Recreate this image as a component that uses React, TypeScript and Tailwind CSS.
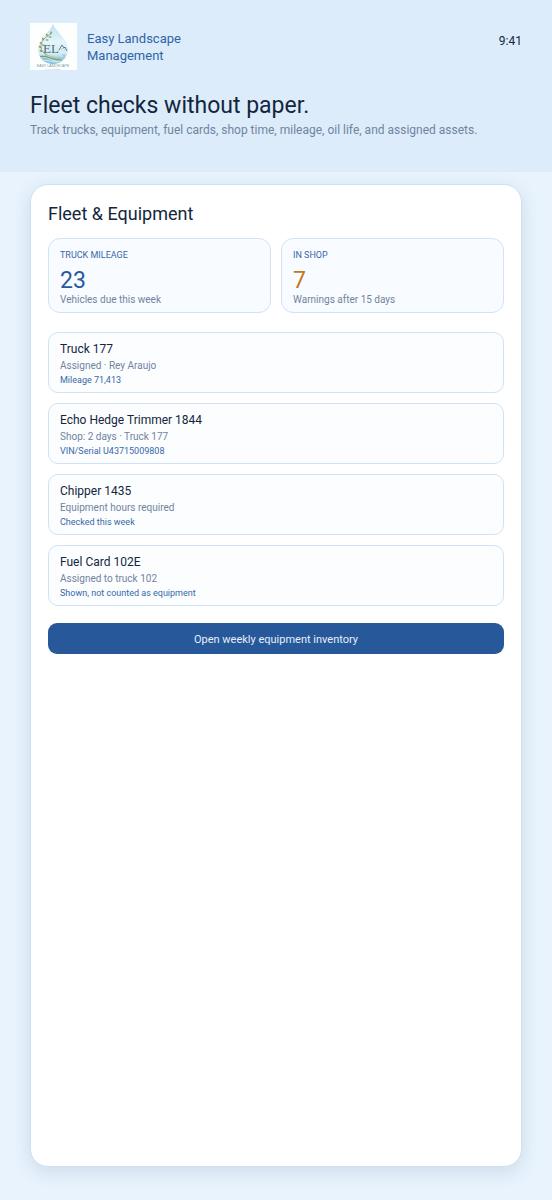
const stats = [
    { label: "TRUCK MILEAGE", value: "23", note: "Vehicles due this week", color: "text-[#285a9b]" },
    { label: "IN SHOP", value: "7", note: "Warnings after 15 days", color: "text-[#c27a16]" },
];

const assets = [
    { name: "Truck 177", status: "Assigned · Rey Araujo", detail: "Mileage 71,413" },
    { name: "Echo Hedge Trimmer 1844", status: "Shop: 2 days · Truck 177", detail: "VIN/Serial U43715009808" },
    { name: "Chipper 1435", status: "Equipment hours required", detail: "Checked this week" },
    { name: "Fuel Card 102E", status: "Assigned to truck 102", detail: "Shown, not counted as equipment" },
];

function Logo() {
    return (
        <svg viewBox="0 0 47 47" className="size-[47px] shrink-0 bg-[#fdfefe]" role="img" aria-label="Easy Landscape Management logo">
            <defs>
                <linearGradient id="drop" x1="0" y1="0" x2="0" y2="1">
                    <stop offset="0" stopColor="#b9e0f3" />
                    <stop offset="0.45" stopColor="#e6f4fb" />
                    <stop offset="0.75" stopColor="#d3ebf5" />
                    <stop offset="1" stopColor="#58a9dc" />
                </linearGradient>
                <clipPath id="dropClip">
                    <path d="M23 1C25 8 38 16 38 26a15 15 0 0 1-30 0C8 16 21 8 23 1Z" />
                </clipPath>
            </defs>
            <path d="M23 1C25 8 38 16 38 26a15 15 0 0 1-30 0C8 16 21 8 23 1Z" fill="url(#drop)" />
            <g clipPath="url(#dropClip)" fill="none">
                <path d="M8 33c8-2 12 3 18 3s8-2 13-2v10H8Z" fill="#8cc5e5" />
                <path d="M9 35c8-4 13 4 19 3s6-2 10-2" stroke="#e9f5f5" strokeWidth="1" />
                <path d="M10 34c7-3 10 4 22 3" stroke="#81995c" strokeWidth="1.2" />
                <path d="M15 32c5 0 9 4 15 3" stroke="#b9bd70" strokeWidth="0.9" />
                <path d="M13 38c7-2 10 3 18 0" stroke="#d8eff8" strokeWidth="0.9" />
            </g>
            <path d="M17 32C9 28 10 20 14 16s5-3 7-6" fill="none" stroke="#7c8a57" strokeWidth="0.7" />
            <g fill="#8a9e60">
                <ellipse cx="21" cy="10" rx="0.9" ry="1.5" transform="rotate(20 21 10)" />
                <ellipse cx="17" cy="12" rx="0.8" ry="1.5" transform="rotate(-35 17 12)" />
                <ellipse cx="20" cy="14" rx="1.5" ry="0.8" />
                <ellipse cx="13" cy="16" rx="0.8" ry="1.5" transform="rotate(-30 13 16)" />
                <ellipse cx="17" cy="17" rx="1.5" ry="0.8" />
                <ellipse cx="11" cy="20" rx="1.4" ry="0.8" transform="rotate(35 11 20)" />
                <ellipse cx="10" cy="24" rx="1.5" ry="0.9" transform="rotate(30 10 24)" />
                <ellipse cx="11" cy="28" rx="1.5" ry="0.9" transform="rotate(35 11 28)" />
                <ellipse cx="13" cy="22" rx="1.2" ry="0.8" />
            </g>
            <text x="13" y="30" fontSize="13" fill="#4a6f72" fontFamily="Liberation Serif, serif">EL</text>
            <path d="m29 27 3-5 2 3 1-1 2 4" fill="none" stroke="#526f7c" strokeWidth="0.9" />
            <path d="m31 27 2-2 2 2" fill="none" stroke="#a5bec8" strokeWidth="0.7" />
            <path d="M34 35v-4m-2 0 2 2 2-2" fill="none" stroke="#94c3d9" strokeWidth="0.7" />
            <text x="23" y="44" textAnchor="middle" fontSize="3.6" fill="#7799aa" fontFamily="Liberation Sans, sans-serif">EASY LANDSCAPE</text>
            <text x="23" y="46.5" textAnchor="middle" fontSize="2.2" fill="#b4bec2" fontFamily="Liberation Sans, sans-serif">MANAGEMENT</text>
        </svg>
    );
}

export default function App() {
    return (
        <div className="flex min-h-screen flex-col bg-[#e8f3fd] font-['Roboto',sans-serif] text-[#14263d]">
            <header className="bg-[#dcecfb] px-[30px] pt-[23px] pb-8">
                <div className="flex items-start justify-between">
                    <div className="flex items-center gap-[10px]">
                        <Logo />
                        <p className="w-28 text-[13px] leading-[17px] text-[#2f65a7]">Easy Landscape Management</p>
                    </div>
                    <time className="pt-[9px] text-xs leading-[18px]">9:41</time>
                </div>
                <h1 className="mt-[21px] text-[23px] leading-[30px]">Fleet checks without paper.</h1>
                <p className="text-xs leading-[19px] text-[#71849e]">
                    Track trucks, equipment, fuel cards, shop time, mileage, oil life, and assigned assets.
                </p>
            </header>

            <main className="mx-[30px] mt-3 mb-[33px] flex-1 rounded-[18px] border border-[#cfe1f1] bg-white px-[17px] pt-[17px] shadow-[0_5px_18px_rgba(40,80,120,0.14)]">
                <h2 className="text-lg leading-6">Fleet &amp; Equipment</h2>

                <div className="mt-3 grid grid-cols-2 gap-[10px]">
                    {stats.map((stat) => (
                        <div key={stat.label} className="rounded-xl border border-[#d0e3f4] bg-[#f8fbff] px-[11px] pt-[10px] pb-[5px]">
                            <p className="text-[9px] leading-3 text-[#3669a8]">{stat.label}</p>
                            <p className={`mt-2 text-[23px] leading-6 ${stat.color}`}>{stat.value}</p>
                            <p className="text-[10px] leading-[14px] text-[#71849e]">{stat.note}</p>
                        </div>
                    ))}
                </div>

                <ul className="mt-[19px] flex flex-col gap-[10px]">
                    {assets.map((asset) => (
                        <li key={asset.name} className="rounded-[10px] border border-[#d0e3f4] bg-[#fbfdff] px-[11px] pt-2 pb-1">
                            <h3 className="text-xs leading-[17px]">{asset.name}</h3>
                            <p className="text-[10px] leading-[15px] text-[#71849e]">{asset.status}</p>
                            <p className="text-[9px] leading-[15px] text-[#3669a8]">{asset.detail}</p>
                        </li>
                    ))}
                </ul>

                <button type="button" className="mt-[17px] w-full rounded-[9px] bg-[#27599a] pt-2 pb-[6px] text-[11px] leading-[17px] text-[#e6effa]">
                    Open weekly equipment inventory
                </button>
            </main>
        </div>
    );
}
